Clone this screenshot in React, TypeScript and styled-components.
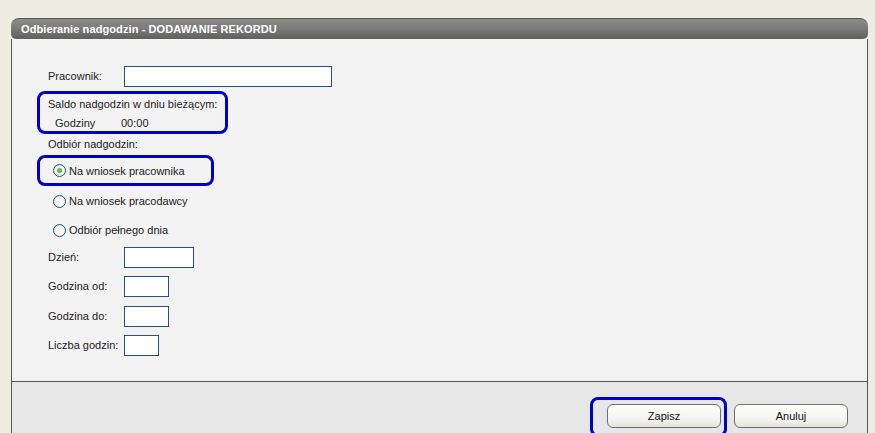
import React, { useState } from 'react'
import styled, { createGlobalStyle } from 'styled-components'

const GlobalStyle = createGlobalStyle`
  html, body {
    margin: 0;
    padding: 0;
    background: #efede2;
    font-family: "Liberation Sans", Arial, sans-serif;
    font-size: 11px;
    color: #222;
    overflow: hidden;
  }
`

const Page = styled.div`
  padding: 18px 8px 0 11px;
  width: 857px;
`

const Panel = styled.div`
  display: flex;
  flex-direction: column;
  height: 415px;
`

const Header = styled.div`
  flex: 0 0 21px;
  box-sizing: border-box;
  display: flex;
  align-items: center;
  padding-left: 10px;
  border-radius: 8px 8px 5px 5px;
  background: linear-gradient(#8b8b89 0%, #7c7c7a 45%, #5f5f5d 100%);
  border-top: 1px solid #5a5a58;
  color: #fff;
  font-weight: bold;
  font-size: 11px;
  letter-spacing: 0.1px;
`

const Body = styled.div`
  flex: 0 0 342px;
  box-sizing: border-box;
  background: #f3f3f3;
  border-left: 1px solid #555;
  border-right: 1px solid #555;
  padding: 27px 0 0 36px;
  display: flex;
  flex-direction: column;

  & > * {
    flex-shrink: 0;
  }
`

const Footer = styled.div`
  flex: 1 0 auto;
  background: #e7e7e7;
  border-top: 1px solid #555;
  border-left: 1px solid #555;
  border-right: 1px solid #555;
  display: flex;
  justify-content: flex-end;
  align-items: flex-start;
  padding: 15px 19px 0 0;
  gap: 7px;
`

const FieldRow = styled.div<{ $top?: number }>`
  display: flex;
  align-items: center;
  height: 20px;
  margin-top: ${(p) => p.$top ?? 0}px;
`

const Label = styled.span`
  width: 76px;
  white-space: nowrap;
`

const Input = styled.input<{ $w: number }>`
  box-sizing: border-box;
  width: ${(p) => p.$w}px;
  height: 21px;
  border: 1px solid #1f4f9a;
  background: #fff;
  padding: 0 3px;
  font: inherit;
  outline: none;
`

const Highlight = styled.div<{ $w: number; $h: number }>`
  box-sizing: border-box;
  width: ${(p) => p.$w}px;
  height: ${(p) => p.$h}px;
  border: 3px solid #0000c8;
  border-radius: 8px;
`

const SaldoBox = styled(Highlight)`
  margin: 5px 0 0 -11px;
  padding: 3px 0 0 8px;
  display: flex;
  flex-direction: column;
  gap: 4px;
`

const Line = styled.div`
  height: 15px;
  line-height: 15px;
  white-space: nowrap;
`

const HoursLine = styled(Line)`
  display: flex;
  padding-left: 7px;
`

const HoursLabel = styled.span`
  width: 66px;
`

const SectionTitle = styled(Line)`
  margin-top: 3px;
`

const RadioBox = styled(Highlight)`
  margin: 3px 0 0 -11px;
  display: flex;
  align-items: center;
  padding: 0 0 0 13px;
`

const RadioRow = styled.label<{ $top?: number }>`
  display: flex;
  align-items: center;
  height: 16px;
  margin-top: ${(p) => p.$top ?? 0}px;
  padding-left: ${(p) => (p.$top ? 5 : 0)}px;
  cursor: pointer;
`

const RadioCircle = styled.span<{ $checked: boolean }>`
  box-sizing: border-box;
  width: 13px;
  height: 13px;
  border-radius: 50%;
  border: 1px solid #1d5281;
  background: radial-gradient(circle at 65% 65%, #fff 0%, #f2f1ea 60%, #dcdad0 100%);
  display: flex;
  align-items: center;
  justify-content: center;
  margin-right: 3px;

  &::after {
    content: '';
    width: 5px;
    height: 5px;
    border-radius: 50%;
    background: radial-gradient(circle at 40% 40%, #6fd36f, #21a121);
    display: ${(p) => (p.$checked ? 'block' : 'none')};
  }
`

const ButtonFrame = styled(Highlight)`
  padding: 4px 4px 0 14px;
`

const Button = styled.button`
  width: 114px;
  height: 24px;
  border: 1px solid #707070;
  border-radius: 6px;
  background: linear-gradient(#fdfdfb 0%, #f3f3ee 70%, #e2e1da 100%);
  font: inherit;
  color: #111;
  cursor: pointer;
`

const PlainButton = styled(Button)`
  margin-top: 7px;
`

const options = ['Na wniosek pracownika', 'Na wniosek pracodawcy', 'Odbiór pełnego dnia']
const radioGaps = [7, 13]

export default function App() {
  const [choice, setChoice] = useState(0)

  return (
    <Page>
      <GlobalStyle />
      <Panel>
        <Header>Odbieranie nadgodzin - DODAWANIE REKORDU</Header>
        <Body>
          <FieldRow>
            <Label>Pracownik:</Label>
            <Input $w={208} />
          </FieldRow>
          <SaldoBox $w={191} $h={43}>
            <Line>Saldo nadgodzin w dniu bieżącym:</Line>
            <HoursLine>
              <HoursLabel>Godziny</HoursLabel>
              <span>00:00</span>
            </HoursLine>
          </SaldoBox>
          <SectionTitle>Odbiór nadgodzin:</SectionTitle>
          <RadioBox $w={177} $h={31}>
            <RadioRow onClick={() => setChoice(0)}>
              <RadioCircle $checked={choice === 0} />
              {options[0]}
            </RadioRow>
          </RadioBox>
          {options.slice(1).map((o, i) => (
            <RadioRow key={o} $top={radioGaps[i]} onClick={() => setChoice(i + 1)}>
              <RadioCircle $checked={choice === i + 1} />
              {o}
            </RadioRow>
          ))}
          <FieldRow $top={9}>
            <Label>Dzień:</Label>
            <Input $w={70} />
          </FieldRow>
          <FieldRow $top={9}>
            <Label>Godzina od:</Label>
            <Input $w={45} />
          </FieldRow>
          <FieldRow $top={10}>
            <Label>Godzina do:</Label>
            <Input $w={45} />
          </FieldRow>
          <FieldRow $top={9}>
            <Label>Liczba godzin:</Label>
            <Input $w={35} />
          </FieldRow>
        </Body>
        <Footer>
          <ButtonFrame $w={137} $h={40}>
            <Button>Zapisz</Button>
          </ButtonFrame>
          <PlainButton>Anuluj</PlainButton>
        </Footer>
      </Panel>
    </Page>
  )
}
